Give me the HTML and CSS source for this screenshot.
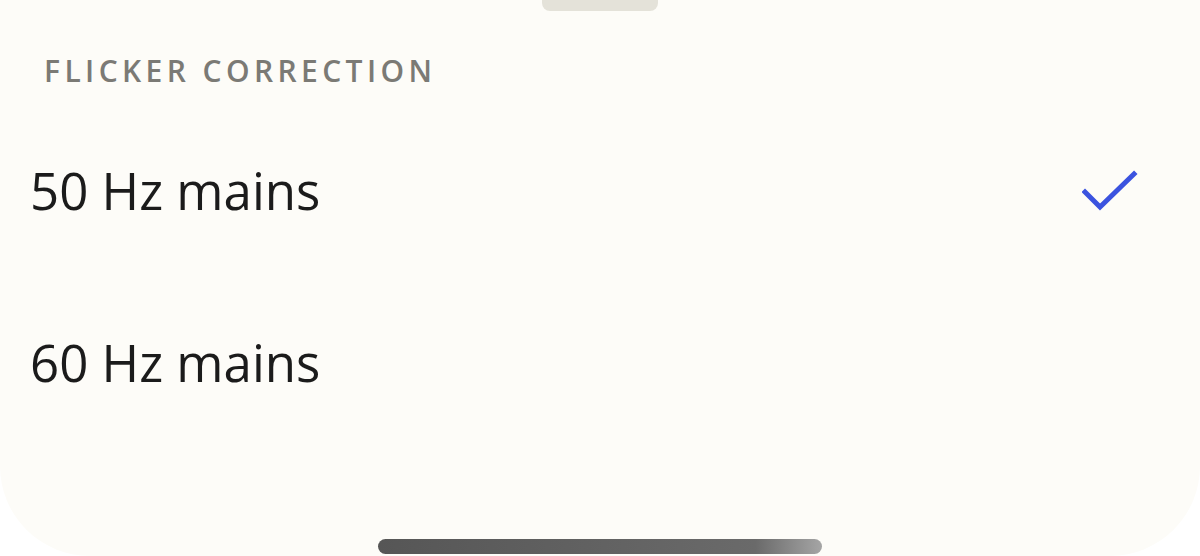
FILE: index.html
```html
<!DOCTYPE html>
<html lang="en">
<head>
    <meta charset="UTF-8">
    <meta name="viewport" content="width=device-width, initial-scale=1.0">
    <title>Flicker correction</title>
    <link rel="stylesheet" href="styles.css">
</head>
<body>

    <div class="sheet">
        <div class="grabber"></div>

        <h3 class="section-title">FLICKER CORRECTION</h3>

        <div class="options">
            <div class="option selected">
                <span class="label">50 Hz mains</span>
                <svg class="check" width="56" height="44" viewBox="0 0 56 44">
                    <path d="M3 22 L18 37 L52 4" fill="none" stroke="#3b53df" stroke-width="5" stroke-linecap="square"/>
                </svg>
            </div>

            <div class="option">
                <span class="label">60 Hz mains</span>
            </div>
        </div>

        <div class="home-bar"></div>
    </div>

</body>
</html>
```

FILE: styles.css
```css
html, body {
    margin: 0;
    background: #ffffff;
}
body {
    font-family: "Open Sans", Arial, sans-serif;
    width: 1200px;
    height: 556px;
    overflow: hidden;
}
.sheet {
    height: 556px;
    background: #fdfcf8;
    border-radius: 0 0 90px 90px;
    display: flex;
    flex-direction: column;
    align-items: stretch;
}
.grabber {
    align-self: center;
    width: 116px;
    height: 11px;
    background: #e4e2d9;
    border-radius: 0 0 8px 8px;
}
.section-title {
    margin: 45px 0 0 44px;
    font-size: 30px;
    font-weight: 600;
    letter-spacing: 4.4px;
    color: #7b7a75;
    line-height: 30px;
}
.options {
    margin-top: 18px;
}
.option {
    height: 172px;
    display: flex;
    align-items: center;
    justify-content: space-between;
    padding: 0 62px 0 30px;
}
.label {
    font-size: 51px;
    color: #1b1b1b;
}
.check {
    display: block;
    margin-top: 4px;
}
.home-bar {
    margin-top: auto;
    margin-bottom: 2px;
    align-self: center;
    width: 444px;
    height: 15px;
    border-radius: 8px;
    background: linear-gradient(90deg, #565656 0%, #6a6a6a 85%, #a5a5a5 100%);
}
```
